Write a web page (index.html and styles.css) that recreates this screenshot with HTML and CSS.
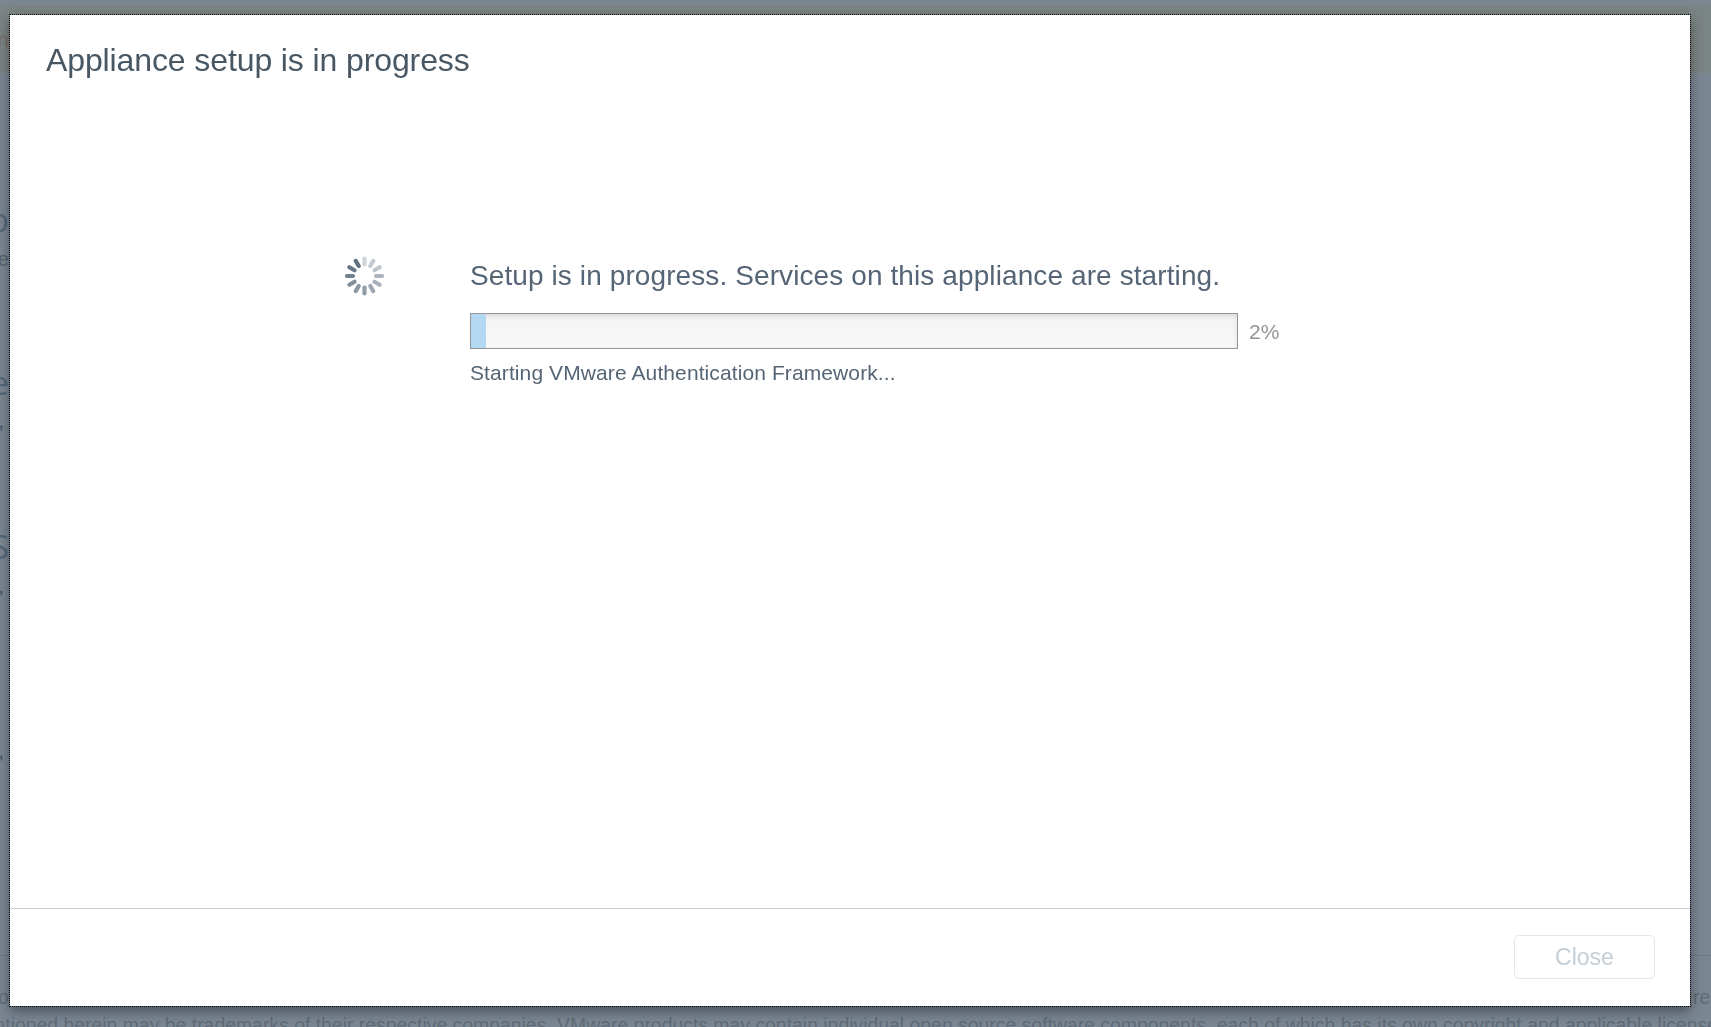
FILE: index.html
```html
<!DOCTYPE html>
<html lang="en">
<head>
<meta charset="utf-8">
<title>Appliance setup</title>
<link rel="stylesheet" href="styles.css">
</head>
<body>
<div class="page">
  <div class="banner"><span class="edge">n</span></div>
  <main class="content">
    <div class="edge heading first">p</div>
    <div class="edge copy">te</div>
    <div class="edge heading second">e</div>
    <div class="edge tail">,</div>
    <div class="edge heading third">S</div>
    <div class="edge tail fourth">,</div>
    <div class="edge tail fifth">,</div>
  </main>
  <footer class="legal">
    <div class="legal-row"><span>o</span><span>reg</span></div>
    <div class="legal-line">ntioned herein may be trademarks of their respective companies. VMware products may contain individual open source software components, each of which has its own copyright and applicable license</div>
  </footer>
</div>
<section class="dialog" role="dialog" aria-labelledby="title">
  <h1 class="title" id="title">Appliance setup is in progress</h1>
  <div class="body">
    <svg class="spinner" viewBox="-20.5 -20 40 40" stroke-width="4.2" stroke-linecap="round">
      <g stroke="#5f7080">
        <path d="M0-11.5V-17.5" opacity=".3"/>
        <path d="M0-11.5V-17.5" opacity=".36" transform="rotate(30)"/>
        <path d="M0-11.5V-17.5" opacity=".4" transform="rotate(60)"/>
        <path d="M0-11.5V-17.5" opacity=".5" transform="rotate(90)"/>
        <path d="M0-11.5V-17.5" opacity=".54" transform="rotate(120)"/>
        <path d="M0-11.5V-17.5" opacity=".6" transform="rotate(150)"/>
        <path d="M0-11.5V-17.5" opacity=".68" transform="rotate(180)"/>
        <path d="M0-11.5V-17.5" opacity=".72" transform="rotate(210)"/>
        <path d="M0-11.5V-17.5" opacity=".78" transform="rotate(240)"/>
        <path d="M0-11.5V-17.5" opacity=".88" transform="rotate(270)"/>
        <path d="M0-11.5V-17.5" opacity=".95" transform="rotate(300)"/>
        <path d="M0-11.5V-17.5" transform="rotate(330)"/>
      </g>
    </svg>
    <div class="status">
      <p class="message">Setup is in progress. Services on this appliance are starting.</p>
      <div class="progress">
        <div class="track"><div class="fill" style="width:2%"></div></div>
        <span class="percent">2%</span>
      </div>
      <p class="detail">Starting VMware Authentication Framework...</p>
    </div>
  </div>
  <div class="actions"><button class="close" disabled>Close</button></div>
</section>
</body>
</html>
```
FILE: styles.css
```css
* { box-sizing: border-box; }
body {
  margin: 0;
  height: 1027px;
  overflow: hidden;
  background: #7a8692;
  font-family: "Liberation Sans", Arial, sans-serif;
}
p, h1 { margin: 0; font-weight: 400; }
.page { height: 1027px; padding-top: 5px; display: flex; flex-direction: column; overflow: hidden; }
.banner { height: 68px; background: #7a8482; flex: none; padding-top: 21px; font-size: 21px; line-height: 28px; color: #7a6c67; }
.content { height: 882px; flex: none; overflow: hidden; color: #556879; }
.edge { display: flex; justify-content: flex-end; width: 9px; overflow: hidden; white-space: nowrap; }
.heading { font-size: 33px; line-height: 40px; height: 40px; font-family: "Open Sans", sans-serif; font-weight: 400; }
.first { margin-top: 127px; }
.copy { font-size: 20px; line-height: 28px; height: 28px; margin-top: 5px; color: #56616b; }
.second { margin-top: 90px; }
.tail { font-size: 21px; line-height: 24px; height: 24px; width: 4px; margin-top: 6px; color: #3d5468; }
.third { margin-top: 94px; }
.fourth { margin-top: 7px; }
.fifth { margin-top: 141px; }
.legal { height: 80px; flex: none; border-top: 1px solid #6e7b87; padding-top: 27px; font-size: 19.4px; line-height: 28px; color: #606c78; }
.legal-row { display: flex; justify-content: space-between; height: 28px; margin-left: -2px; width: 1723px; }
.legal-line { white-space: nowrap; margin-left: -5.5px; }
.dialog {
  position: fixed;
  left: 9px;
  top: 14px;
  width: 1682px;
  height: 993px;
  display: flex;
  flex-direction: column;
  border: 1px dotted #111;
  background: #fff content-box;
  box-shadow: 0 5px 12px -1px rgba(0, 0, 0, .42);
}
.title { padding: 26px 0 0 36px; font-size: 32px; line-height: 38px; letter-spacing: -.11px; color: #485764; flex: none; }
.body { flex: 1; display: flex; padding: 165px 0 0 334px; gap: 86px; }
.spinner { width: 40px; height: 40px; margin-top: 12px; flex: none; }
.status { padding-top: 12px; }
.message { font-size: 28px; line-height: 40px; letter-spacing: .1px; color: #566575; white-space: nowrap; }
.progress { display: flex; align-items: center; gap: 11px; margin-top: 17px; }
.track { width: 768px; height: 36px; border: 1px solid #969696; background: linear-gradient(#f3f3f3, #f9f9f9); box-shadow: inset 0 2px 5px rgba(0, 0, 0, .1); }
.fill { height: 100%; background: #b3d8f2; }
.percent { font-size: 21px; color: #959595; padding-top: 2px; }
.detail { font-size: 21px; line-height: 28px; margin-top: 10px; letter-spacing: .1px; color: #566575; white-space: nowrap; }
.actions { height: 98px; flex: none; border-top: 1px solid #c7d0d6; display: flex; justify-content: flex-end; padding: 26px 35px 0 0; }
.close { width: 141px; height: 44px; border: 1px solid #e1e8ea; border-radius: 5px; background: #fff; color: #c5ced5; font: 23px "Liberation Sans", Arial, sans-serif; padding: 0; }
```
